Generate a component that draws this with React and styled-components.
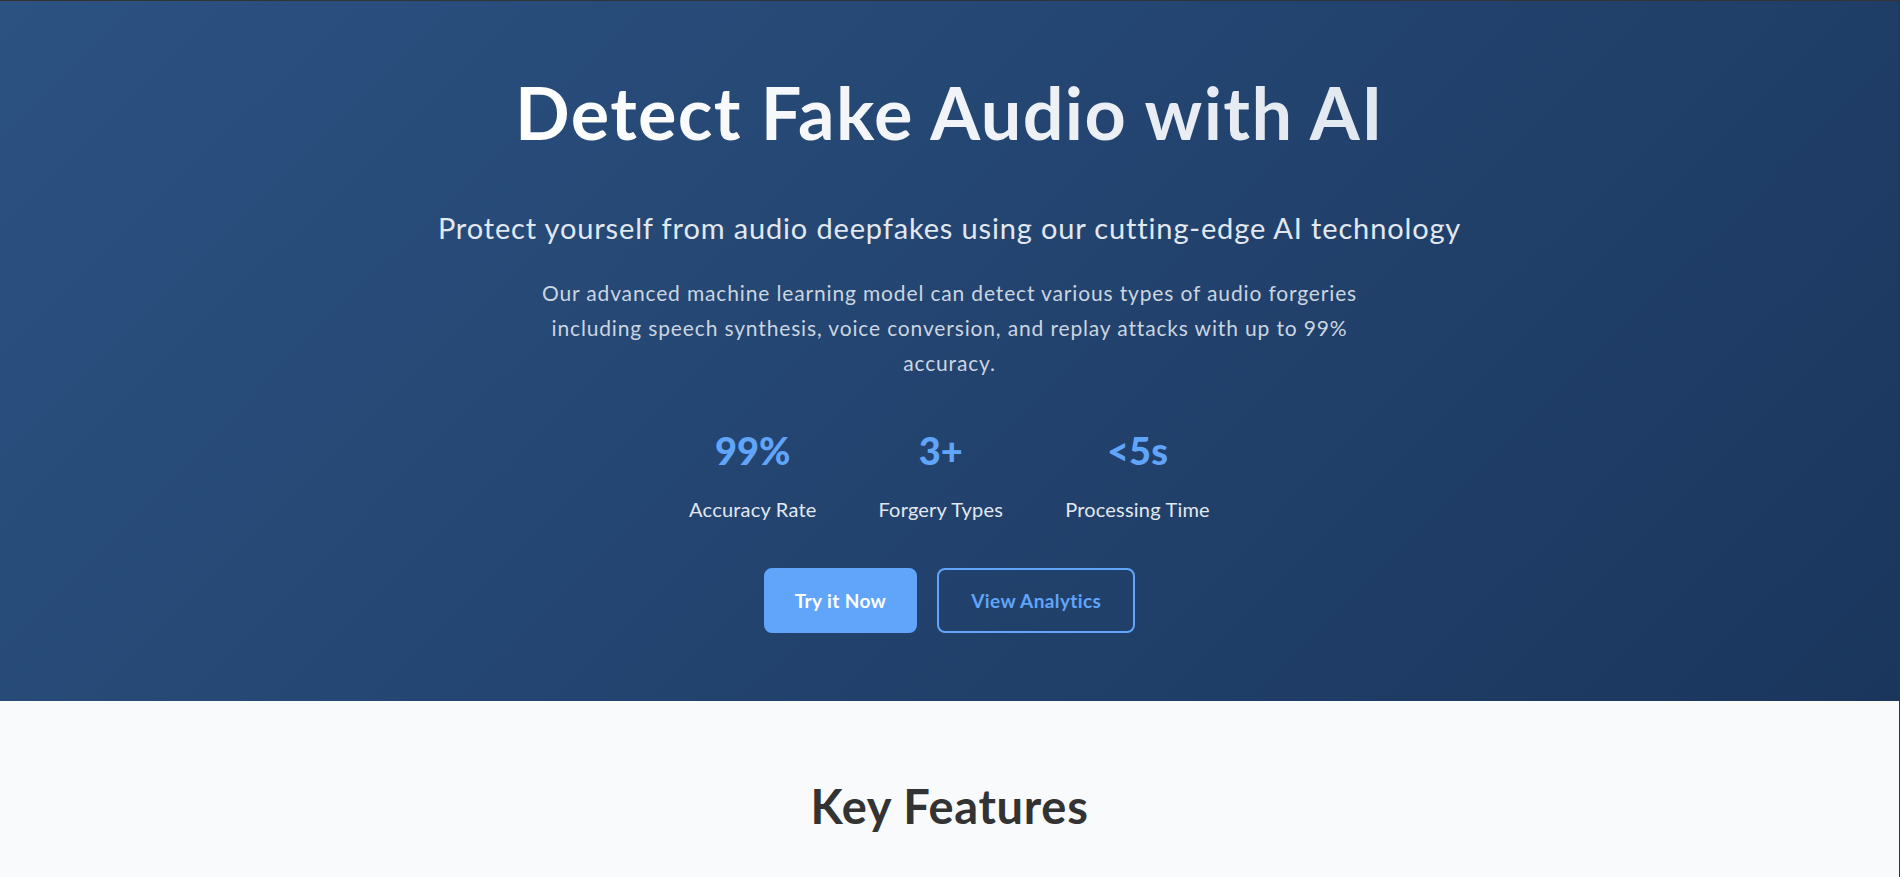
import React from "react";
import styled, { createGlobalStyle } from "styled-components";

const GlobalStyle = createGlobalStyle`
  html, body { margin: 0; padding: 0; }
  body {
    font-family: "Lato", "Open Sans", sans-serif;
    background: #f8fafc;
    -webkit-font-smoothing: antialiased;
  }
  * { box-sizing: border-box; }
`;

const Page = styled.div`
  min-height: 877px;
  background: #f8fafc;
  border-top: 1px solid #333333;
  border-right: 1px solid #333333;
`;

const Hero = styled.section`
  height: 700px;
  padding-top: 68px;
  background: linear-gradient(135deg, #2c5282 0%, #1a365d 100%);
  display: flex;
  flex-direction: column;
  align-items: center;
  text-align: center;
`;

const Title = styled.h1`
  margin: 0;
  font-size: 72px;
  line-height: 86px;
  font-weight: 700;
  letter-spacing: 1.35px;
  background: linear-gradient(90deg, #ffffff 0%, #e2e8f0 100%);
  -webkit-background-clip: text;
  background-clip: text;
  color: transparent;
`;

const Subtitle = styled.p`
  margin: 53px 0 0;
  font-size: 29px;
  line-height: 40px;
  font-weight: 400;
  letter-spacing: 0.85px;
  color: #e2e8f0;
`;

const Description = styled.p`
  margin: 27px 0 0;
  max-width: 850px;
  font-size: 21px;
  line-height: 35px;
  letter-spacing: 0.85px;
  color: #cbd5e0;
`;

const Stats = styled.div`
  display: flex;
  justify-content: center;
  gap: 62px;
  margin-top: 47px;
`;

const Stat = styled.div`
  display: flex;
  flex-direction: column;
  align-items: center;
`;

const StatValue = styled.div`
  font-size: 38px;
  line-height: 46px;
  font-weight: 900;
  color: #60a5fa;
`;

const StatLabel = styled.div`
  margin-top: 22px;
  font-size: 20px;
  line-height: 28px;
  letter-spacing: 0.2px;
  color: #e2e8f0;
`;

const Actions = styled.div`
  display: flex;
  gap: 20px;
  margin-top: 45px;
`;

const Button = styled.button`
  height: 65px;
  padding: 0 ${(p) => (p.$outline ? "32px" : "29px")};
  border-radius: 8px;
  font-family: inherit;
  font-size: 19px;
  font-weight: 700;
  letter-spacing: 0.4px;
  cursor: pointer;
  border: 2px solid #60a5fa;
  background: ${(p) => (p.$outline ? "transparent" : "#60a5fa")};
  color: ${(p) => (p.$outline ? "#60a5fa" : "#ffffff")};
`;

const Features = styled.section`
  padding-top: 77px;
  display: flex;
  justify-content: center;
`;

const SectionTitle = styled.h2`
  margin: 0;
  font-size: 47px;
  line-height: 56px;
  font-weight: 700;
  color: #333333;
  letter-spacing: 0.7px;
`;

const stats = [
  { value: "99%", label: "Accuracy Rate" },
  { value: "3+", label: "Forgery Types" },
  { value: "<5s", label: "Processing Time" },
];

export default function App() {
  return (
    <Page>
      <GlobalStyle />
      <Hero>
        <Title>Detect Fake Audio with AI</Title>
        <Subtitle>
          Protect yourself from audio deepfakes using our cutting-edge AI technology
        </Subtitle>
        <Description>
          Our advanced machine learning model can detect various types of audio forgeries
          including speech synthesis, voice conversion, and replay attacks with up to 99%
          accuracy.
        </Description>
        <Stats>
          {stats.map((s) => (
            <Stat key={s.label}>
              <StatValue>{s.value}</StatValue>
              <StatLabel>{s.label}</StatLabel>
            </Stat>
          ))}
        </Stats>
        <Actions>
          <Button>Try it Now</Button>
          <Button $outline>View Analytics</Button>
        </Actions>
      </Hero>
      <Features>
        <SectionTitle>Key Features</SectionTitle>
      </Features>
    </Page>
  );
}
